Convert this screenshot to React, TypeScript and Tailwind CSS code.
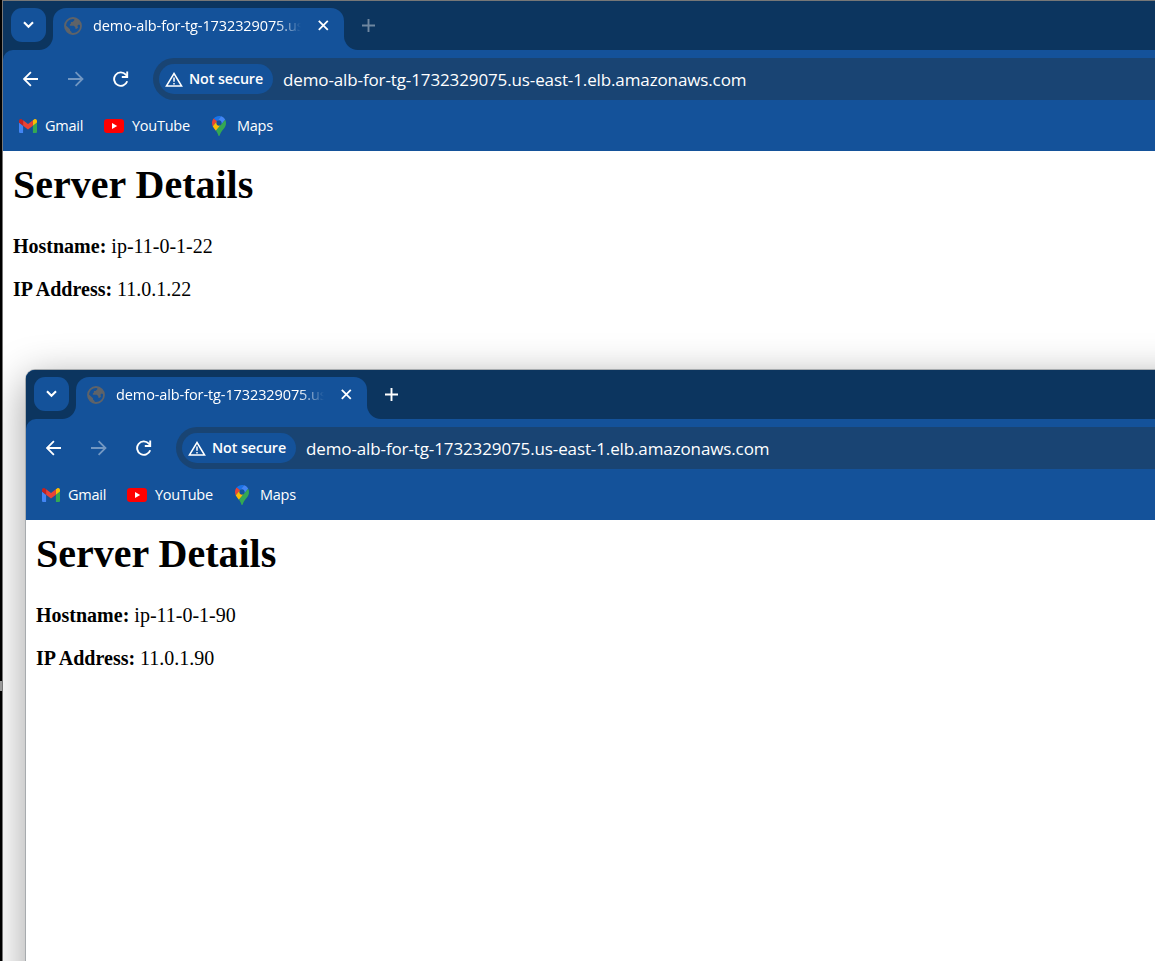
import type { ReactNode } from "react";

const HOST = "demo-alb-for-tg-1732329075.us-east-1.elb.amazonaws.com";

function Chevron() {
  return (
    <svg width="11" height="8" viewBox="0 0 11 8" fill="none" stroke="#fff" strokeWidth="2.1">
      <path d="M1 1.3 5.5 5.8 10 1.3" />
    </svg>
  );
}

function Globe() {
  return (
    <svg width="18" height="18" viewBox="0 0 18 18" className="shrink-0">
      <circle cx="9" cy="9" r="8" fill="none" stroke="#5f6368" strokeWidth="1.8" />
      <path
        d="M11.200 1.300 11 3.300 9.300 5H7.400v2L6 7.900v1.300h4.200l1.400 1.300v1.600h1.700l2.200 1.700-1.800 1.500L9 17v-1.700L7.400 14v-1.700L1.200 7.600C1.800 3.800 5.600.3 11.200 1.300Z"
        fill="none"
      />
      <path
        d="M10.300 1.300v2L8.500 4.900H6.900v1.700L5.800 7.500v1.200h4l1.500 1.500v1.500h1.600l1.300-1.500-1-1.300 1.500-1.300 1.300.400C16.500 4.500 14 1.700 10.300 1.300ZM1.200 7.800l4.800 4.400v1.400l1.600 1.300v1.800C3.500 16 .8 12 1.200 7.800Z"
        fill="#5f6368"
      />
    </svg>
  );
}

function Cross() {
  return (
    <svg width="11" height="11" viewBox="0 0 11 11" stroke="#fff" strokeWidth="1.8">
      <path d="m.8.8 9.000 9.000M9.800.8l-9.000 9.000" />
    </svg>
  );
}

function Plus({ dim }: { dim: boolean }) {
  return (
    <svg width="13" height="13" viewBox="0 0 13 13" stroke={dim ? "#6f87a0" : "#fff"} strokeWidth="1.9">
      <path d="M6.500 0v13M0 6.500h13" />
    </svg>
  );
}

function Arrow({ forward = false }: { forward?: boolean }) {
  return (
    <svg
      width="16"
      height="16"
      viewBox="0 0 16 16"
      fill="none"
      stroke={forward ? "#7297c2" : "#fff"}
      strokeWidth="1.8"
    >
      {forward ? (
        <path d="M0 8h13.900M7.600 1.100 14.500 8l-6.900 6.900" />
      ) : (
        <path d="M15 8H1.600M7.900 1.100 1 8l6.900 6.900" />
      )}
    </svg>
  );
}

function Reload() {
  return (
    <svg width="16" height="16" viewBox="0 0 16 16" fill="none" stroke="#fff" strokeWidth="1.9">
      <path d="M14.200 10.200A6.700 6.700 0 1 1 12.800 3.600L14.200 5.200" />
      <path d="M14.200.6v5.400H8.800" />
    </svg>
  );
}

function Warning() {
  return (
    <svg width="18" height="15" viewBox="0 0 18 15" fill="none" stroke="#fff" className="shrink-0">
      <path d="M9 1.500 16.600 14.100H1.400Z" strokeWidth="1.500" />
      <path d="M9 5.600v4.200M9 10.900v1.700" strokeWidth="1.500" />
    </svg>
  );
}

function GmailLogo() {
  return (
    <svg width="18" height="14" viewBox="52 42 88 66" preserveAspectRatio="none">
      <path fill="#4285f4" d="M58 108h14V74L52 59v43c0 3.320 2.690 6 6 6" />
      <path fill="#34a853" d="M120 108h14c3.320 0 6-2.690 6-6V59l-20 15" />
      <path fill="#fbbc04" d="M120 48v26l20-15v-8c0-7.420-8.470-11.650-14.400-7.200" />
      <path fill="#ea4335" d="M72 74V48l24 18 24-18v26L96 92" />
      <path fill="#c5221f" d="M52 51v8l20 15V48l-5.600-4.200c-5.940-4.450-14.400-.22-14.400 7.200" />
    </svg>
  );
}

function YouTubeLogo() {
  return (
    <svg width="20" height="14" viewBox="0 0 20 14">
      <rect width="20" height="14" rx="3.200" fill="#f00" />
      <path d="m8 4 5.200 3L8 10Z" fill="#fff" />
    </svg>
  );
}

function MapsLogo() {
  return (
    <svg width="14" height="20" viewBox="0 0 92.300 132.300">
      <path fill="#1a73e8" d="M60.200 2.200C55.800.8 51 0 46.100 0 32 0 19.300 6.400 10.800 16.500l21.800 18.300L60.200 2.200z" />
      <path fill="#ea4335" d="M10.800 16.500C4.100 24.500 0 34.900 0 46.100c0 8.700 1.700 15.700 4.600 22l28-33.300-21.800-18.300z" />
      <path fill="#4285f4" d="M46.200 28.500c9.800 0 17.700 7.900 17.700 17.700 0 4.300-1.600 8.300-4.200 11.400 0 0 13.900-16.600 27.500-32.700-5.600-10.800-15.300-19-27-22.700L32.600 34.800c3.300-3.800 8.100-6.300 13.600-6.300" />
      <path fill="#fbbc04" d="M46.200 63.800c-9.800 0-17.700-7.900-17.700-17.700 0-4.300 1.500-8.300 4.100-11.300l-28 33.300c4.800 10.600 12.800 19.200 21 29.900l34.100-40.500c-3.300 3.900-8.100 6.300-13.500 6.300" />
      <path fill="#34a853" d="M59.100 109.200c15.400-24.100 33.300-35 33.300-63 0-7.700-1.900-14.900-5.200-21.300L25.600 98c2.600 3.400 5.300 7.300 7.900 11.300 9.400 14.500 6.800 23.100 12.800 23.100s3.400-8.700 12.800-23.200" />
    </svg>
  );
}

function Bookmark({ icon, children, className }: { icon: ReactNode; children: ReactNode; className: string }) {
  return (
    <div className={`flex shrink-0 items-center ${className}`}>
      {icon}
      <span>{children}</span>
    </div>
  );
}

function BrowserWindow({ hostname, address, active = false }: { hostname: string; address: string; active?: boolean }) {
  return (
    <div className="flex h-full w-full flex-col overflow-hidden bg-[#14529a] font-['Open_Sans','Noto_Sans',sans-serif] text-white">
      <div className="bg-[#0c355f]">
        <div className="flex h-[49px] items-start">
          <div className="h-[49px] w-[50px] shrink-0 bg-[#14529a]">
            <div className="h-[49px] w-[50px] rounded-br-[14px] bg-[#0c355f] pt-[7px] pl-2">
              <div className="flex h-[34px] w-[35px] items-center justify-center rounded-[11px] bg-[#14529a]">
                <Chevron />
              </div>
            </div>
          </div>
          <div className="flex h-full w-[290.500px] shrink-0 items-end bg-[#0c355f]">
            <div className="flex h-[42px] w-full items-start rounded-t-[13px] bg-[#14529a] pt-[9px] pl-[11px]">
              <Globe />
              <div className="ml-[11px] w-[208px] overflow-hidden mask-r-from-88% mask-r-to-100% text-[14.500px] leading-[18px] tracking-[-0.100px] whitespace-nowrap">
                {HOST}
              </div>
              <div className="mt-[3px] ml-[17px]">
                <Cross />
              </div>
            </div>
          </div>
          <div className="h-full grow bg-[#14529a]">
            <div className="h-full rounded-bl-[14px] bg-[#0c355f] pt-[18px] pl-[18.500px]">
              <Plus dim={!active} />
            </div>
          </div>
        </div>
        <div className="flex h-[50px] items-center rounded-tl-[10px] bg-[#14529a] pt-2 pl-5">
          <div className="flex h-[42px] shrink-0 items-center gap-[29px]">
            <Arrow />
            <Arrow forward />
            <Reload />
          </div>
          <div className="ml-6 flex h-[42px] grow items-center rounded-l-full bg-[#194473] pl-1.5">
            <div className="flex h-[30px] w-[114px] shrink-0 items-center rounded-full bg-[#14529a] pl-1.5">
              <Warning />
              <span className="ml-1.5 text-[14.300px] leading-5 font-semibold tracking-[-0.100px] whitespace-nowrap">
                Not secure
              </span>
            </div>
            <span className="ml-2.5 pt-0.5 text-[17px] leading-6 tracking-[-0.120px] whitespace-nowrap">{HOST}</span>
          </div>
        </div>
      </div>
      <div className="flex h-[51px] shrink-0 items-center pl-4 text-[14.500px] leading-5 tracking-[-0.250px]">
        <Bookmark className="w-[85px] gap-2" icon={<GmailLogo />}>Gmail</Bookmark>
        <Bookmark className="w-[108px] gap-2" icon={<YouTubeLogo />}>YouTube</Bookmark>
        <Bookmark className="gap-[11px]" icon={<MapsLogo />}>Maps</Bookmark>
      </div>
      <div className="grow bg-white pt-[11px] pl-2.5 font-['Liberation_Serif',serif] text-[20px] leading-[23px] text-black">
        <h1 className="text-[40px] leading-[46px] font-bold">Server Details</h1>
        <p className="mt-[27px]">
          <b>Hostname:</b> {hostname}
        </p>
        <p className="mt-5">
          <b>IP Address:</b> {address}
        </p>
      </div>
    </div>
  );
}

export default function App() {
  return (
    <div className="relative h-[961px] w-[1155px] overflow-hidden bg-black">
      <div className="h-full pl-0.5">
        <div className="h-full border-t border-l border-[#777] bg-white">
          <BrowserWindow hostname="ip-11-0-1-22" address="11.0.1.22" />
        </div>
      </div>
      <div className="absolute top-[681px] left-0 h-2.5 w-0.5 bg-[#999]" />
      <div className="absolute inset-y-0 right-0 left-[3px] overflow-hidden">
        <div className="absolute top-[369px] left-[22px] h-[700px] w-[1240px] overflow-hidden rounded-tl-[10px] border-t border-l border-[#a7abae] shadow-[0_10px_42px_rgba(0,0,0,0.380)]">
          <BrowserWindow hostname="ip-11-0-1-90" address="11.0.1.90" active />
        </div>
      </div>
    </div>
  );
}
